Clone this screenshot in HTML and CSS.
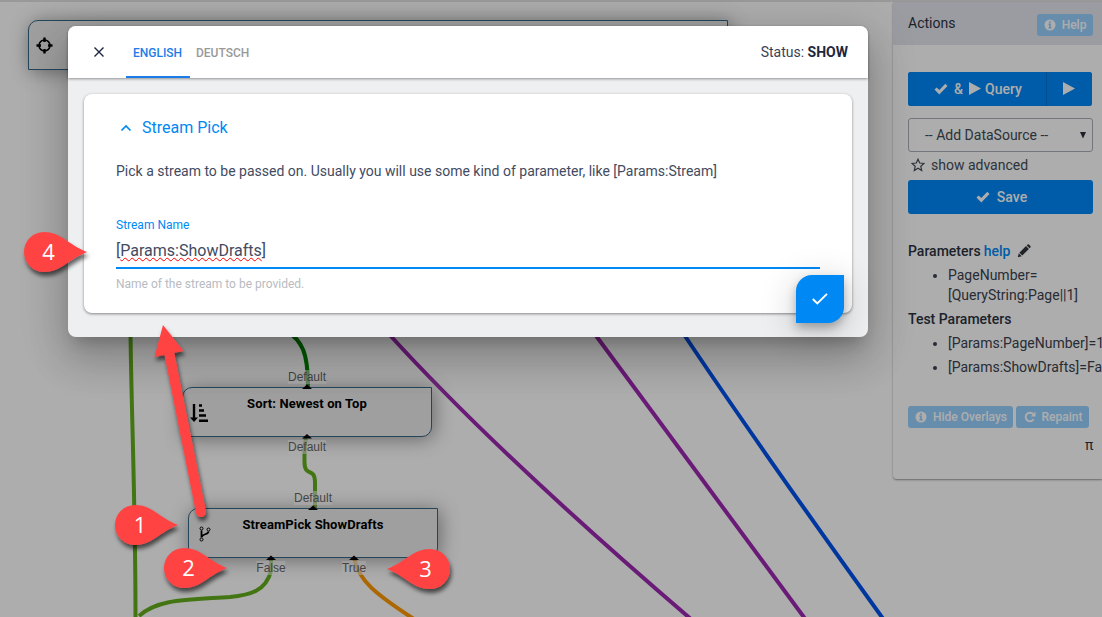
FILE: index.html
```html
<!DOCTYPE html>
<html lang="en">
<head>
<meta charset="utf-8">
<title>Query Designer</title>
<link rel="stylesheet" href="styles.css">
</head>
<body>
<svg class="defs" width="0" height="0">
  <symbol id="check" viewBox="0 0 14 12"><path d="M.5 6.600 2.700 4.400 5.300 7 11.300.8 13.500 3 5.300 11.400z" fill="currentColor"/></symbol>
  <symbol id="play" viewBox="0 0 12 13"><path d="M0 0 12 6.500 0 13z" fill="currentColor"/></symbol>
  <symbol id="info" viewBox="0 0 12 12"><path fill-rule="evenodd" fill="currentColor" d="M6 .5a5.500 5.500 0 1 0 0 11 5.500 5.500 0 0 0 0-11zM5.100 2.200h1.800v1.500H5.100zM4.300 4.600h2.600v3.700h.8v1.100H4.300V8.300h.8V5.700h-.8z"/></symbol>
</svg>
<div class="app">
  <main class="canvas">
    <svg class="wires" width="892" height="617" viewBox="0 0 892 617">
      <path class="green" d="M130.500 330C131 400 135.500 500 135.500 617"/>
      <path class="dark" d="M286 330C302 341 308 352 308 387"/>
      <path class="green" d="M306 437C304 448 304.500 456 304.500 462C304.500 478 315 466 315 483V508"/>
      <path class="green" d="M271 560V571C266 591 250 595 230 597C185 600 158 599 139 616"/>
      <path class="orange" d="M354 558C358 580 375 594 417 621"/>
      <path class="purple" d="M388 333Q497 453 692 620"/>
      <path class="purple" d="M594 333 806 620"/>
      <path class="blue" d="M683 333Q755 441 884 620"/>
    </svg>
    <section class="node node-in">
      <svg class="ic-target" width="17" height="17" viewBox="0 0 17 17"><circle cx="8.500" cy="8.500" r="5.500" fill="none" stroke="#000" stroke-width="1.500"/><path d="M8.500.5v4.500M8.500 12v4.500M.5 8.500H5M12 8.500h4.500" stroke="#000" stroke-width="2.400"/></svg>
    </section>
    <section class="node node-sort">
      <h3>Sort: Newest on Top</h3>
      <svg class="ic-sort" width="18" height="19" viewBox="0 0 18 19"><path d="M4 0v14" stroke="#000" stroke-width="2.400"/><path d="M0 13.500h8L4 18z"/><path d="M9 1.500h3M9 6.500h5M9 11.500h7M9 16.800h9" stroke="#000" stroke-width="2.400"/></svg>
    </section>
    <section class="node node-pick">
      <h3>StreamPick ShowDrafts</h3>
      <svg class="ic-fork" width="12" height="16" viewBox="0 0 12 16" fill="none" stroke="#000"><circle cx="2.500" cy="2.500" r="1.500"/><circle cx="9.500" cy="3.500" r="1.500"/><circle cx="2.500" cy="13.500" r="1.500"/><path d="M2.500 4.500V11.500M9.500 5.500C9.500 9 3 7.500 2.800 11" stroke-width="1.800"/></svg>
    </section>
    <svg class="wires" width="892" height="617" viewBox="0 0 892 617"><path d="M302 389 307 384.500 312 389zM302 438.500 307 434 312 438.500zM308 510 313 505.500 318 510zM266 560 271 555.500 276 560zM349 560 354 555.500 359 560z"/></svg>
    <span class="port p1">Default</span>
    <span class="port p2">Default</span>
    <span class="port p3">Default</span>
    <span class="port p4">False</span>
    <span class="port p5">True</span>
  </main>
  <aside class="panel">
    <header class="panel-head"><span>Actions</span><button class="btn soft help"><svg width="12" height="12"><use href="#info"/></svg>Help</button></header>
    <div class="panel-body">
      <div class="group">
        <button class="btn run"><svg class="ck" width="14" height="12"><use href="#check"/></svg><span class="amp">&amp;</span><svg class="pl" width="12" height="13"><use href="#play"/></svg><span>Query</span></button>
        <button class="btn only"><svg width="12" height="13"><use href="#play"/></svg></button>
      </div>
      <div class="select"><span>-- Add DataSource --</span><svg width="6" height="7" viewBox="0 0 6 7"><path d="M0 0h6L3 6.500z" fill="#2b3038"/></svg></div>
      <div class="advanced"><svg width="14" height="14" viewBox="0 0 14 14"><path d="M7 1.200 8.700 5l4.300.4-3.200 2.900.9 4.200L7 10.300 3.300 12.500l.9-4.200L1 5.400 5.300 5z" fill="none" stroke="#444c58" stroke-width="1.200"/></svg>show advanced</div>
      <button class="btn save"><svg width="14" height="12"><use href="#check"/></svg>Save</button>
      <div class="label first"><b>Parameters</b> <b class="link">help</b><svg width="14" height="14" viewBox="0 0 14 14"><path d="M.8 13.200 1.800 9.300 4.700 12.200zM2.400 8.700 9 2.100l2.900 2.900-6.600 6.600zM9.700 1.400l.9-.8q.7-.5 1.300 0l1.500 1.500q.5.700 0 1.300l-.8.900z" fill="#30353c"/></svg></div>
      <ul class="list one"><li>PageNumber=<br>[QueryString:Page||1]</li></ul>
      <div class="label"><b>Test Parameters</b></div>
      <ul class="list two"><li>[Params:PageNumber]=1</li><li>[Params:ShowDrafts]=Fa</li></ul>
      <div class="tools">
        <button class="btn soft hide"><svg width="12" height="12"><use href="#info"/></svg>Hide Overlays</button>
        <button class="btn soft repaint"><svg width="12" height="12" viewBox="0 0 12 12"><path d="M9.700 8.200A4.300 4.300 0 1 1 9.300 3.200" fill="none" stroke="currentColor" stroke-width="1.900"/><path d="M11.500.6v4.800H6.800z" fill="currentColor"/></svg>Repaint</button>
      </div>
      <div class="pi">π</div>
    </div>
  </aside>
</div>
<div class="backdrop"></div>
<div class="dialog">
  <header class="dialog-head">
    <svg class="close" width="10" height="10" viewBox="0 0 10 10"><path d="M.5.5 9.500 9.500M9.500.5.5 9.500" stroke="#1d2840" stroke-width="1.400"/></svg>
    <nav class="tabs"><span class="tab on">ENGLISH</span><span class="tab">DEUTSCH</span></nav>
    <div class="status">Status: <b>SHOW</b></div>
  </header>
  <div class="dialog-body">
    <section class="card">
      <h2><svg width="12" height="8" viewBox="0 0 12 8"><path d="M1.500 6.500 6 2l4.500 4.500" fill="none" stroke="#0088f4" stroke-width="1.700"/></svg>Stream Pick</h2>
      <p class="intro">Pick a stream to be passed on. Usually you will use some kind of parameter, like [Params:Stream]</p>
      <div class="field">
        <label>Stream Name</label>
        <div class="value">[<span class="spell">Params:ShowDrafts</span>]</div>
        <div class="hint">Name of the stream to be provided.</div>
      </div>
    </section>
  </div>
  <button class="fab"><svg width="16" height="12" viewBox="0 0 16 12"><path d="M.8 6 5.300 10.500 15 .8" fill="none" stroke="#fff" stroke-width="1.900"/></svg></button>
</div>
<svg class="callouts" width="1102" height="617" viewBox="0 0 1102 617">
  <defs><filter id="drop" x="-30%" y="-30%" width="160%" height="170%"><feDropShadow dx="1.500" dy="4" stdDeviation="2" flood-color="#000" flood-opacity=".6"/></filter>
  <path id="pin" d="M0-20C17-20 23-8 43 0 23 8 17 20 0 20A20 20 0 0 1 0-20z" fill="#ff4343"/></defs>
  <g filter="url(#drop)"><path d="M169 352 201 512" stroke="#ff4343" stroke-width="10" stroke-linecap="round"/><path d="M163 325 183.500 351 154.500 357z" fill="#ff4343"/></g>
  <g filter="url(#drop)"><use href="#pin" x="44" y="252"/></g>
  <g filter="url(#drop)"><use href="#pin" x="135" y="525"/></g>
  <g filter="url(#drop)"><use href="#pin" x="184" y="568"/></g>
  <g filter="url(#drop)"><use href="#pin" transform="translate(430 569) scale(-1 1)"/></g>
  <text x="48.500" y="260">4</text><text x="140" y="533">1</text><text x="188.500" y="576">2</text><text x="425.500" y="577">3</text>
</svg>
</body>
</html>
```

FILE: styles.css
```css
* { box-sizing: border-box; }
body { margin: 0; width: 1102px; height: 617px; overflow: hidden; position: relative; background: #fff; font: 14px/20px Roboto, sans-serif; color: #2b333f; }
button { font: inherit; border: 0; padding: 0; margin: 0; }
h2, h3, p, ul { margin: 0; padding: 0; }
svg { flex: none; }
.defs { position: absolute; }
.app { display: flex; height: 617px; border-top: 2px solid #e2e2e2; }

.canvas { position: relative; width: 892px; flex: none; }
.wires { position: absolute; left: 0; top: -2px; fill: #000; }
.wires [class] { fill: none; stroke-width: 4; }
.green { stroke: #63ad1d; }
.dark { stroke: #008000; }
.orange { stroke: #ff9800; }
.purple { stroke: #9c27b0; }
.blue { stroke: #0052eb; }
.node { position: absolute; width: 250px; height: 50px; background: #ebebeb; border: 1px solid #346789; border-radius: 10px 0; box-shadow: 2px 2px 19px #999; }
.node h3 { font: bold 13px/16px Roboto, sans-serif; letter-spacing: .1px; text-align: center; padding-top: 8px; color: #000; }
.node svg { position: absolute; }
.node-in { left: 28px; top: 18px; width: 700px; }
.node-sort { left: 182px; top: 385px; }
.node-pick { left: 188px; top: 506px; }
.ic-target { left: 7px; top: 16px; }
.ic-sort { left: 7px; top: 16px; }
.ic-fork { left: 10px; top: 17px; }
.port { position: absolute; transform: translateX(-50%); font: 12px/14px "Liberation Sans", sans-serif; color: #666; background: rgba(255,255,255,.5); }
.p1 { left: 307px; top: 368px; }
.p2 { left: 307px; top: 438px; }
.p3 { left: 313px; top: 489px; }
.p4 { left: 271px; top: 559px; }
.p5 { left: 354px; top: 559px; }

.panel { width: 209px; height: 477px; margin-left: 1px; flex: none; background: #fff; border-radius: 0 0 0 4px; box-shadow: 0 1px 2px rgba(0,0,0,.4); }
.panel-head { display: flex; height: 43px; padding: 11px 0 0 15px; background: #e3e6ed; }
.panel-head span { width: 129px; }
.panel-body { padding: 27px 0 0 15px; }
.btn { display: flex; align-items: center; justify-content: center; background: #0088f8; color: #fff; border-radius: 3px; font-weight: 500; height: 34px; padding-bottom: 1px; }
.soft { background: #99d0ff; font-size: 12px; height: 22px; gap: 5px; padding-bottom: 0; }
.help { width: 56px; margin-top: 1px; gap: 6px; }
.group { display: flex; gap: 1px; background: #0073d3; width: 184px; border-radius: 3px; }
.run { width: 138px; border-radius: 3px 0 0 3px; padding-left: 2px; }
.amp { margin: 0 6px; }
.pl { margin-right: 4px; }
.only { width: 45px; border-radius: 0 3px 3px 0; padding-right: 2px; }
.select { display: flex; align-items: center; justify-content: space-between; width: 185px; height: 34px; margin-top: 12px; border: 1px solid #aaafb8; border-radius: 3px; padding: 0 6px 0 16px; color: #424a55; }
.advanced { display: flex; align-items: center; gap: 6px; height: 20px; padding-left: 3px; margin: 3px 0 5px; color: #434c58; }
.save { width: 185px; gap: 7px; padding-left: 2px; }
.label { height: 20px; display: flex; gap: 4px; align-items: center; }
.label b { font-weight: 500; }
.first { margin-top: 27px; gap: 3px; }
.link { color: #0088f4; }
.first svg { margin-left: 4px; }
.list { padding-left: 40px; white-space: nowrap; color: #3a424e; }
.one { margin: 4px 0; }
.two { padding-top: 4px; }
.two li { margin-bottom: 4px; }
.tools { display: flex; gap: 3px; margin-top: 25px; padding-top: 4px; }
.hide { width: 105px; padding-left: 1px; gap: 6px; }
.repaint { width: 73px; gap: 6px; padding-left: 1px; }
.pi { padding-left: 177px; margin-top: 7px; }

.backdrop { position: absolute; inset: 0; background: rgba(0,0,0,.32); }
.dialog { position: absolute; left: 68px; top: 26px; width: 800px; height: 311px; border-radius: 8px; background: #eeeff1; box-shadow: 0 11px 15px -7px rgba(0,0,0,.2), 0 24px 38px 3px rgba(0,0,0,.14), 0 9px 46px 8px rgba(0,0,0,.12); color: #1d2840; }
.dialog-head { position: relative; display: flex; align-items: center; height: 52px; background: #fff; border-radius: 8px 8px 0 0; padding: 0 20px 0 26px; box-shadow: 0 1px 3px rgba(0,0,0,.4); }
.tabs { display: flex; margin-left: 22px; }
.tab { font: 500 12px/54px Roboto, sans-serif; height: 52px; color: #999; padding: 0 6px; }
.on { width: 64px; padding: 0 7px; color: #1c7ce8; border-bottom: 2px solid #1c7ce8; }
.status { margin-left: auto; color: #394257; }
.status b { font-weight: 700; color: #1d2840; }
.dialog-body { padding: 16px; }
.card { height: 219px; background: #fff; border-radius: 8px; padding: 24px 32px 0; box-shadow: 0 1px 3px rgba(0,0,0,.45); }
.card h2 { display: flex; align-items: center; gap: 10px; font: 400 16px/20px Roboto, sans-serif; color: #0088f4; padding-left: 4px; }
.intro { margin-top: 23px; color: #424b5f; }
.field { margin-top: 36px; }
.field label { display: block; font-size: 12px; line-height: 16px; color: #0088f4; }
.value { height: 36px; border-bottom: 2px solid #0088f4; font-size: 16px; line-height: 36px; color: #424b5f; }
.spell { text-decoration: underline wavy red 1px; text-underline-offset: 1px; text-decoration-skip-ink: none; }
.hint { font-size: 12px; line-height: 16px; margin-top: 7px; color: #b8bbc1; }
.fab { position: absolute; left: 728px; top: 249px; width: 48px; height: 48px; display: flex; align-items: center; justify-content: center; background: #0088f4; border-radius: 16px 0; box-shadow: 0 5px 10px rgba(0,0,0,.25), 0 8px 36px rgba(0,0,0,.22); }

.callouts { position: absolute; left: 0; top: 0; }
.callouts text { font: 22px "Open Sans", sans-serif; fill: #fff; text-anchor: middle; }
```
